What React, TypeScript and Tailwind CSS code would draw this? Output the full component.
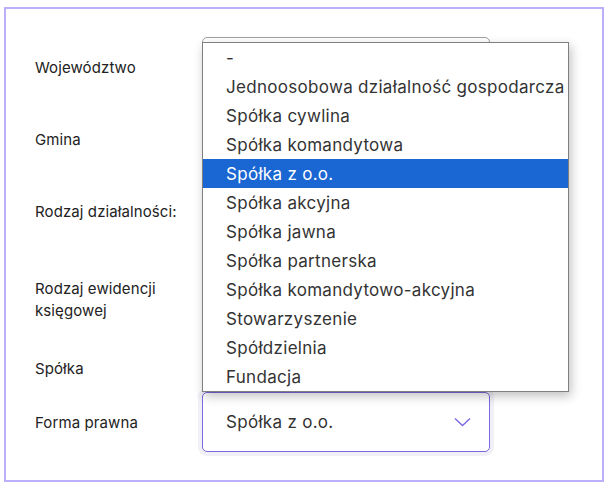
import React from "react";

const options = [
  "-",
  "Jednoosobowa działalność gospodarcza",
  "Spółka cywlina",
  "Spółka komandytowa",
  "Spółka z o.o.",
  "Spółka akcyjna",
  "Spółka jawna",
  "Spółka partnerska",
  "Spółka komandytowo-akcyjna",
  "Stowarzyszenie",
  "Spółdzielnia",
  "Fundacja",
];

function Chevron() {
  return (
    <svg width="17" height="10" viewBox="0 0 17 10" fill="none" stroke="#7a68e0" strokeWidth="1.4">
      <polyline points="1,1.5 8.5,8.5 16,1.5" />
    </svg>
  );
}

function SelectBox({ value, muted }: { value?: string; muted?: boolean }) {
  return (
    <div
      className={
        "flex h-[60px] w-[288px] items-center justify-between rounded-[5px] bg-white pl-[23px] pr-[18px] " +
        (muted ? "border border-[#a0a0a0]" : "border border-[#7a68e0] shadow-[0_0_0_4px_#f1f0f6]")
      }
    >
      <span className="pt-[2px] text-[17px] tracking-[0.3px] text-[#333]">{value}</span>
      <Chevron />
    </div>
  );
}

function Label({ children }: { children: React.ReactNode }) {
  return (
    <div className="w-[167px] shrink-0 pr-[20px] pt-[2px] text-[15px] leading-[22px] tracking-[0.1px] text-[#222]">
      {children}
    </div>
  );
}

export default function App() {
  const selected = 4;

  return (
    <div className="pl-[4px] pt-[7px]" style={{ fontFamily: "Inter, 'Noto Sans', sans-serif" }}>
      <div className="relative h-[475px] w-[600px] border-2 border-[#bcaefa] bg-white">
        <div className="flex flex-col pl-[29px] pt-[28px]">
          <div className="flex h-[60px] items-center">
            <Label>Województwo</Label>
            <SelectBox muted />
          </div>
          <div className="mt-[12px] flex h-[60px] items-center">
            <Label>Gmina</Label>
            <SelectBox muted />
          </div>
          <div className="mt-[12px] flex h-[60px] items-center">
            <Label>Rodzaj działalności:</Label>
            <SelectBox muted />
          </div>
          <div className="mt-[12px] flex h-[92px] items-center">
            <Label>
              Rodzaj ewidencji
              <br />
              księgowej
            </Label>
            <SelectBox muted />
          </div>
          <div className="mt-[10px] flex h-[26px] items-center">
            <Label>Spółka</Label>
          </div>
          <div className="mt-[11px] flex h-[60px] items-center">
            <Label>Forma prawna</Label>
            <SelectBox value="Spółka z o.o." />
          </div>
        </div>

        <ul className="absolute left-[196px] top-[33px] w-[367px] border border-[#7f7f7f] bg-white shadow-[2px_4px_10px_rgba(0,0,0,0.25)]">
          {options.map((o, i) => (
            <li
              key={o}
              className={
                "flex h-[29px] items-center pl-[23px] pt-[2px] text-[17px] tracking-[0.3px] whitespace-nowrap " +
                (i === selected ? "bg-[#1a66d2] text-white" : "text-[#333]")
              }
            >
              {o}
            </li>
          ))}
        </ul>
      </div>
    </div>
  );
}
